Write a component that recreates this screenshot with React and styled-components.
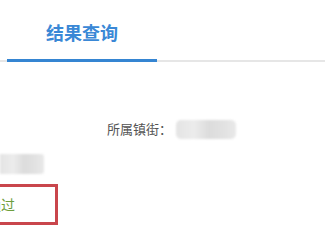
import React from "react";
import styled, { createGlobalStyle } from "styled-components";

const Global = createGlobalStyle`
  html, body { margin: 0; padding: 0; background: #fff; }
  body { font-family: "Noto Sans CJK SC", "Noto Sans", sans-serif; overflow: hidden; }
`;

const Page = styled.div`
  width: 325px;
  height: 244px;
  overflow: hidden;
  background: #fff;
`;

const TabBar = styled.div`
  display: flex;
  padding-top: 17px;
  border-bottom: 2px solid #e6e6e6;
`;

const Tab = styled.div`
  width: 150px;
  margin-left: 7px;
  margin-bottom: -2px;
  height: 42px;
  display: flex;
  justify-content: center;
  align-items: flex-start;
  font-size: 18px;
  line-height: 30px;
  font-weight: 700;
  color: ${(p) => (p.$active ? "#3a88d6" : "#666")};
  border-bottom: 3px solid ${(p) => (p.$active ? "#3585d2" : "transparent")};
`;

const Body = styled.div`
  display: flex;
  flex-direction: column;
  padding-top: 57px;
`;

const FieldRow = styled.div`
  display: flex;
  align-items: center;
  padding-left: 107px;
  height: 20px;
`;

const Label = styled.span`
  font-size: 13px;
  color: #555;
  line-height: 20px;
`;

const Blur = styled.div`
  width: ${(p) => p.$w}px;
  height: ${(p) => p.$h}px;
  margin-left: ${(p) => p.$ml || 0}px;
  background: linear-gradient(90deg, #e4e4e4 0%, #ececec 30%, #dcdcdc 55%, #e2e2e2 80%, #e9e9e9 100%);
  border-radius: 5px;
  filter: blur(1px);
`;

const LeftBlock = styled(Blur)`
  margin-top: 15px;
  border-radius: 0 3px 3px 0;
`;

const ResultBox = styled.div`
  margin-top: 10px;
  margin-left: -30px;
  width: 68px;
  height: 33px;
  border: 3px solid #c9464c;
  display: flex;
  align-items: center;
  padding-left: 14px;
  padding-bottom: 2px;
  box-sizing: content-box;
  font-size: 14px;
  color: #6e9e3c;
`;

export default function App() {
  return (
    <Page>
      <Global />
      <TabBar>
        <Tab $active>结果查询</Tab>
      </TabBar>
      <Body>
        <FieldRow>
          <Label>所属镇街：</Label>
          <Blur $w={60} $h={19} $ml={4} />
        </FieldRow>
        <LeftBlock $w={44} $h={20} />
        <ResultBox>通过</ResultBox>
      </Body>
    </Page>
  );
}
